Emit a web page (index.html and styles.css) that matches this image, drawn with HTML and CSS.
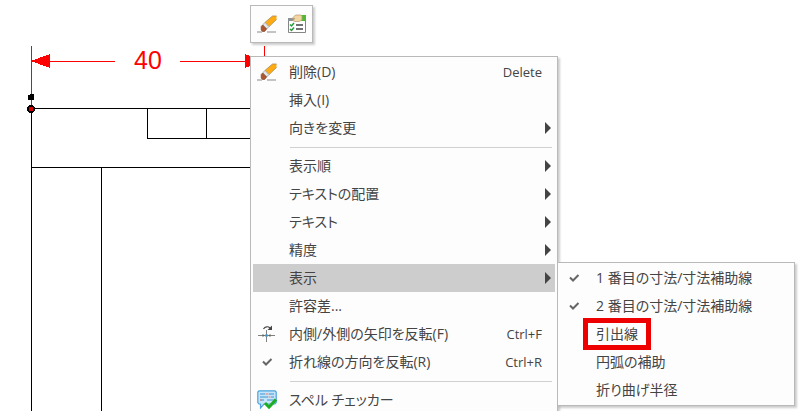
FILE: index.html
```html
<!DOCTYPE html>
<html lang="ja">
<head>
<meta charset="utf-8">
<meta name="viewport" content="width=device-width, initial-scale=1">
<title>寸法</title>
<link rel="stylesheet" href="styles.css">
</head>
<body>
<svg class="defs" aria-hidden="true">
  <symbol id="eraser" viewBox="0 0 20 20">
    <path d="M0 18H5M10 18H19" stroke="#b0b0b0" stroke-width="1.5"/>
    <path d="M8 8.400 15.500 2H19.500V5.500L12 12.600Z" fill="#ffab14"/>
    <path d="M8 8.400 15.500 2H19.500M19.500 5.500 12 12.600" fill="none" stroke="#a58a5c" stroke-width=".8"/>
    <path d="M5.600 11 8 8.400 12 12.600 9.600 15Z" fill="#e2e5e8" stroke="#8a8a8a" stroke-width=".7"/>
    <path d="M5.600 11 9.600 15 7.600 17.500H5.500L4.200 16V12.500Z" fill="#b0562e" stroke="#80482f" stroke-width=".7"/>
  </symbol>
  <symbol id="properties" viewBox="0 0 20 20">
    <path d="M1.500 4.500H18.500V18.500H1.500Z" fill="#fff" stroke="#858585"/>
    <path d="M1 4H7V7H1Z" fill="#8a9298"/>
    <path d="M14 1H19V7H14Z" fill="#4fb934"/>
    <path d="M5 4.500 8.500 1H14L15 2V6L12 7.500H8L5.500 6.500 8 4.500Z" fill="#f0d6a4" stroke="#b6986b" stroke-width=".7"/>
    <path d="M3 10.500 4.500 12 7 9M3 15 4.500 16.500 7 13.500" fill="none" stroke="#279b35" stroke-width="1.500"/>
    <path d="M9 11H16M9 15H16" stroke="#444" stroke-width="1.500"/>
  </symbol>
  <symbol id="flip" viewBox="0 0 20 20">
    <path d="M1 11.500H18M9.500 6V18" fill="none" stroke="#808080"/>
    <path d="M5.500 10 8 11.500 5.500 13ZM13.500 10 11 11.500 13.500 13Z" fill="#666"/>
    <path d="M8 11.500H11" stroke="#25a5dc" stroke-width="2"/>
    <path d="M6.500 5C8 2.500 11 2 13 4" fill="none" stroke="#444" stroke-width="1.200"/>
    <path d="M15 1.500V6H10.500Z" fill="#444"/>
  </symbol>
  <symbol id="check" viewBox="0 0 20 20">
    <path d="M6 9.500 9 12.500 14.500 7" fill="none" stroke="#666" stroke-width="2"/>
  </symbol>
  <symbol id="spell" viewBox="0 0 20 20">
    <path d="M2 .8H18L19.200 2V12.500L18 14H7L3.500 18V14H2L.8 12.500V2Z" fill="#c5e5fa" stroke="#4ba3dd" stroke-width="1.200"/>
    <path d="M3 4H8M12 4H17M3 7H11M14 7H17M3 10H7M10 10H17" stroke="#3f94d0"/>
    <path d="M8.500 4H11.500M11.500 7H13.500M3 10H5" stroke="#e57968"/>
    <path d="M8 13 12 17 19 9.500" fill="none" stroke="#1cae20" stroke-width="3"/>
  </symbol>
  <symbol id="more" viewBox="0 0 6 12">
    <path d="M0 0 6 6 0 12Z" fill="#444"/>
  </symbol>
</svg>

<main class="sheet">
  <svg class="drawing" role="img" aria-label="図面" shape-rendering="crispEdges">
    <g class="outline">
      <path d="M31.500 108V2000M31 108.500H264M147.500 108V138M206.500 108V138M147 138.500H264M31 167.500H264M101.500 167V2000"/>
    </g>
    <g class="dimension">
      <rect x="31" y="46" width="1" height="62"/>
      <rect x="264" y="46" width="1" height="62"/>
      <rect x="31" y="61" width="84" height="1"/>
      <rect x="180" y="61" width="84" height="1"/>
      <path d="M31 61 50 54V68ZM264 61 245 54V68Z"/>
    </g>
    <path d="M28 95H30V94H34V100H28Z"/>
    <path d="M29 105H33V106H34V107H35V111H34V112H33V113H29V112H28V111H27V107H28V106H29Z"/>
    <path class="handle" d="M29 107H33V111H29Z"/>
    <text class="value" x="134" y="69">40</text>
  </svg>

  <div class="panel toolbar" role="toolbar" aria-label="ツール">
    <button aria-label="削除"><svg class="icon"><use href="#eraser"/></svg></button>
    <button aria-label="プロパティ"><svg class="icon"><use href="#properties"/></svg></button>
  </div>

  <ul class="panel menu context" role="menu">
    <li role="none"><button class="item" role="menuitem"><svg class="icon"><use href="#eraser"/></svg><span class="label">削除(D)</span><span class="keys">Delete</span></button></li>
    <li role="none"><button class="item" role="menuitem"><span class="label">挿入(I)</span></button></li>
    <li role="none"><button class="item" role="menuitem"><span class="label">向きを変更</span><svg class="more"><use href="#more"/></svg></button></li>
    <li class="rule" role="separator"></li>
    <li role="none"><button class="item" role="menuitem"><span class="label">表示順</span><svg class="more"><use href="#more"/></svg></button></li>
    <li role="none"><button class="item" role="menuitem"><span class="label">テキストの配置</span><svg class="more"><use href="#more"/></svg></button></li>
    <li role="none"><button class="item" role="menuitem"><span class="label">テキスト</span><svg class="more"><use href="#more"/></svg></button></li>
    <li role="none"><button class="item" role="menuitem"><span class="label">精度</span><svg class="more"><use href="#more"/></svg></button></li>
    <li class="parent" role="none">
      <button class="item open" role="menuitem" aria-expanded="true"><span class="label">表示</span><svg class="more"><use href="#more"/></svg></button>
      <ul class="panel menu submenu" role="menu">
        <li role="none"><button class="item" role="menuitemcheckbox" aria-checked="true"><svg class="icon"><use href="#check"/></svg><span class="label">1 番目の寸法/寸法補助線</span></button></li>
        <li role="none"><button class="item" role="menuitemcheckbox" aria-checked="true"><svg class="icon"><use href="#check"/></svg><span class="label">2 番目の寸法/寸法補助線</span></button></li>
        <li role="none"><button class="item marked" role="menuitemcheckbox" aria-checked="false"><span class="label">引出線</span></button></li>
        <li role="none"><button class="item" role="menuitemcheckbox" aria-checked="false"><span class="label">円弧の補助</span></button></li>
        <li role="none"><button class="item" role="menuitemcheckbox" aria-checked="false"><span class="label">折り曲げ半径</span></button></li>
      </ul>
    </li>
    <li role="none"><button class="item" role="menuitem"><span class="label">許容差...</span></button></li>
    <li role="none"><button class="item" role="menuitem"><svg class="icon"><use href="#flip"/></svg><span class="label">内側/外側の矢印を反転(F)</span><span class="keys">Ctrl+F</span></button></li>
    <li role="none"><button class="item" role="menuitemcheckbox" aria-checked="true"><svg class="icon"><use href="#check"/></svg><span class="label">折れ線の方向を反転(R)</span><span class="keys">Ctrl+R</span></button></li>
    <li class="rule" role="separator"></li>
    <li role="none"><button class="item" role="menuitem"><svg class="icon"><use href="#spell"/></svg><span class="label">スペル チェッカー</span></button></li>
  </ul>
</main>
</body>
</html>
```
FILE: styles.css
```css
*,
*::after {
  box-sizing: border-box;
}

body {
  margin: 0;
  background: #fff;
  color: #444;
  font-family: "Open Sans", "Noto Sans CJK JP", sans-serif;
  font-size: 14px;
  line-height: 20px;
}

.defs {
  position: absolute;
  width: 0;
  height: 0;
}

.sheet {
  position: relative;
  height: 100vh;
  overflow: hidden;
}

.drawing {
  display: block;
  width: 100%;
  height: 100%;
}

.outline {
  fill: none;
  stroke: #000;
}

.dimension {
  fill: #f00;
}

.handle {
  fill: #d00000;
}

.value {
  fill: #f00;
  font-family: "Liberation Sans", sans-serif;
  font-size: 25px;
}

.panel {
  position: absolute;
  background: #fdfdfd;
  border: 1px solid #b9b9b9;
  box-shadow: 2px 2px 2px rgba(0, 0, 0, 0.2);
}

.toolbar {
  left: 250px;
  top: 5px;
  display: flex;
  gap: 10px;
  padding: 8px 5px 8px 6px;
}

button {
  margin: 0;
  padding: 0;
  border: 0;
  background: none;
  color: inherit;
  font: inherit;
  text-align: left;
}

.icon {
  display: block;
  width: 20px;
  height: 20px;
}

.menu {
  margin: 0;
  padding: 1px 2px;
  list-style: none;
}

.context {
  left: 250px;
  top: 56px;
  width: 308px;
}

.item {
  display: grid;
  grid-template-columns: 20px 1fr auto 6px;
  align-items: center;
  width: 100%;
  height: 28px;
  padding: 0 4px;
}

.item .icon {
  grid-column: 1;
}

.label {
  grid-column: 2;
  padding-left: 12px;
  white-space: nowrap;
  font-feature-settings: "palt";
}

.keys {
  grid-column: 3;
  padding-right: 3px;
  font-size: 13px;
}

.more {
  grid-column: 4;
  width: 6px;
  height: 12px;
}

.open {
  background: #cdcdcd;
}

.rule {
  height: 1px;
  margin: 5px 3px 4px 37px;
  background: #d0d0d0;
}

.parent {
  position: relative;
}

.submenu {
  left: 304px;
  top: -2px;
  width: 238px;
}

.marked {
  position: relative;
}

.marked::after {
  content: "";
  position: absolute;
  left: 23px;
  top: -2px;
  width: 68px;
  height: 32px;
  border: 5px solid #ee0000;
}
```
